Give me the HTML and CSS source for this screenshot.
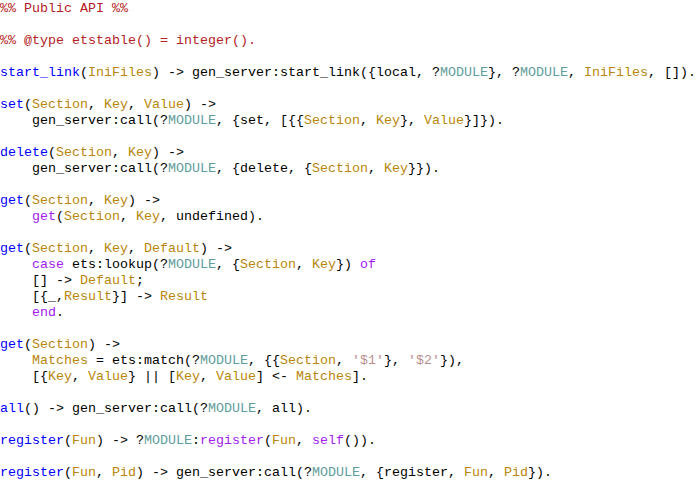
FILE: index.html
```html
<!DOCTYPE html>
<html>
<head>
<meta charset="utf-8">
<link rel="stylesheet" href="styles.css">
</head>
<body>
<pre class="code"><span class="c">%% Public API %%</span>

<span class="c">%% @type etstable() = integer().</span>

<span class="f">start_link</span>(<span class="v">IniFiles</span>) -&gt; gen_server:start_link({local, ?<span class="m">MODULE</span>}, ?<span class="m">MODULE</span>, <span class="v">IniFiles</span>, []).

<span class="f">set</span>(<span class="v">Section</span>, <span class="v">Key</span>, <span class="v">Value</span>) -&gt;
    gen_server:call(?<span class="m">MODULE</span>, {set, [{{<span class="v">Section</span>, <span class="v">Key</span>}, <span class="v">Value</span>}]}).

<span class="f">delete</span>(<span class="v">Section</span>, <span class="v">Key</span>) -&gt;
    gen_server:call(?<span class="m">MODULE</span>, {delete, {<span class="v">Section</span>, <span class="v">Key</span>}}).

<span class="f">get</span>(<span class="v">Section</span>, <span class="v">Key</span>) -&gt;
    <span class="k">get</span>(<span class="v">Section</span>, <span class="v">Key</span>, undefined).

<span class="f">get</span>(<span class="v">Section</span>, <span class="v">Key</span>, <span class="v">Default</span>) -&gt;
    <span class="k">case</span> ets:lookup(?<span class="m">MODULE</span>, {<span class="v">Section</span>, <span class="v">Key</span>}) <span class="k">of</span>
    [] -&gt; <span class="v">Default</span>;
    [{_,<span class="v">Result</span>}] -&gt; <span class="v">Result</span>
    <span class="k">end</span>.

<span class="f">get</span>(<span class="v">Section</span>) -&gt;
    <span class="v">Matches</span> = ets:match(?<span class="m">MODULE</span>, {{<span class="v">Section</span>, <span class="s">'$1'</span>}, <span class="s">'$2'</span>}),
    [{<span class="v">Key</span>, <span class="v">Value</span>} || [<span class="v">Key</span>, <span class="v">Value</span>] &lt;- <span class="v">Matches</span>].

<span class="f">all</span>() -&gt; gen_server:call(?<span class="m">MODULE</span>, all).

<span class="f">register</span>(<span class="v">Fun</span>) -&gt; ?<span class="m">MODULE</span>:<span class="k">register</span>(<span class="v">Fun</span>, <span class="k">self</span>()).

<span class="f">register</span>(<span class="v">Fun</span>, <span class="v">Pid</span>) -&gt; gen_server:call(?<span class="m">MODULE</span>, {register, <span class="v">Fun</span>, <span class="v">Pid</span>}).</pre>
</body>
</html>
```

FILE: styles.css
```css
html, body {
  margin: 0;
  padding: 0;
  background: #ffffff;
}

.code {
  margin: 0;
  padding: 1px 0 0 0;
  font-family: "Liberation Mono", "Courier New", monospace;
  font-size: 13.333px;
  line-height: 16px;
  color: #000000;
  white-space: pre;
}

.c { color: #b22222; }
.f { color: #0000ff; }
.v { color: #b8860b; }
.m { color: #5f9ea0; }
.k { color: #a020f0; }
.s { color: #bc8f8f; }
```
